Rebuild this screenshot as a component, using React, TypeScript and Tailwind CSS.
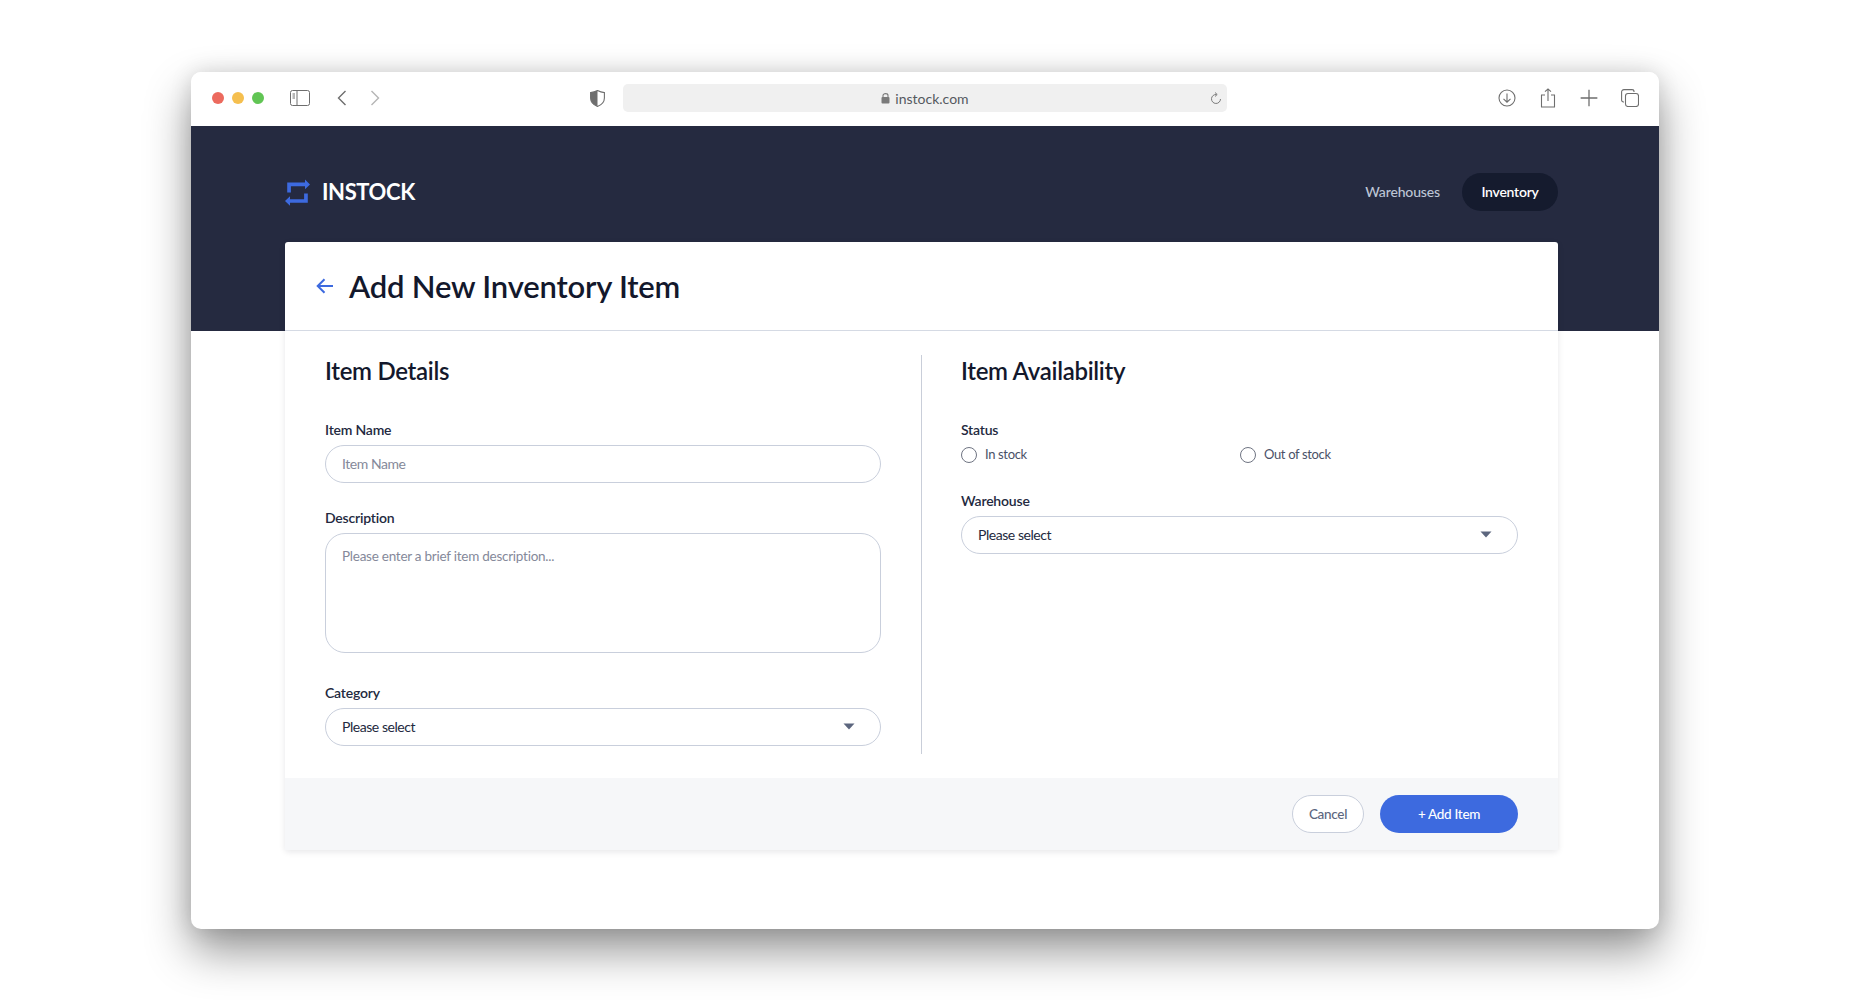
import React from 'react';

const Caret = () => (
  <svg width="12" height="7" viewBox="0 0 12 7" className="mr-[17px]">
    <path d="M0.5 0.5H11.5L6 6.5Z" fill="#5c667e" />
  </svg>
);

const FieldLabel = ({ children, className = '' }: { children: React.ReactNode; className?: string }) => (
  <label className={`block h-5 text-[14px] leading-5 font-semibold tracking-[-0.2px] text-[#232940] ${className}`}>{children}</label>
);

const SelectBox = ({ className = '' }: { className?: string }) => (
  <div className={`flex items-center justify-between h-[38px] rounded-[19px] border border-[#c9cfdc] pl-4 pr-2 pb-px text-[14px] tracking-[-0.45px] text-[#232940] ${className}`}>
    <span>Please select</span>
    <Caret />
  </div>
);

const Radio = ({ label, className = '' }: { label: string; className?: string }) => (
  <label className={`flex items-center gap-2 h-5 text-[13px] tracking-[-0.35px] text-[#4a5168] ${className}`}>
    <span className="block w-4 h-4 rounded-full border border-[#6f7482]" />
    {label}
  </label>
);

const Toolbar = () => (
  <div className="flex items-center h-[54px] pl-[21px] pr-[20px] pb-[2px] bg-white text-[#6e6e6e]">
    <div className="flex items-center gap-2">
      <span className="block w-3 h-3 rounded-full bg-[#ec6a5e]" />
      <span className="block w-3 h-3 rounded-full bg-[#f5bf4f]" />
      <span className="block w-3 h-3 rounded-full bg-[#61c554]" />
    </div>
    <svg width="20" height="16" viewBox="0 0 20 16" fill="none" stroke="currentColor" className="ml-[26px]">
      <rect x="0.5" y="0.5" width="19" height="15" rx="2" />
      <path d="M7 0.5V15.5" />
      <path d="M2.5 4H5M2.5 6H5M2.5 8H5" />
    </svg>
    <svg width="10" height="16" viewBox="0 0 10 16" fill="none" stroke="currentColor" strokeWidth="1.4" className="ml-[27px]">
      <path d="M8.5 1L1.5 8L8.5 15" />
    </svg>
    <svg width="10" height="16" viewBox="0 0 10 16" fill="none" stroke="#b5b5b5" strokeWidth="1.4" className="ml-[23px]">
      <path d="M1.5 1L8.5 8L1.5 15" />
    </svg>
    <svg width="15" height="17" viewBox="0 0 15 17" className="ml-[210px]">
      <path d="M7.5 0.6C9.8 1.8 12 2.4 14.4 2.6V8C14.4 12 11.4 14.9 7.5 16.4C3.6 14.9 0.6 12 0.6 8V2.6C3 2.4 5.2 1.8 7.5 0.6Z" fill="none" stroke="#6e6e6e" strokeWidth="1.1" />
      <path d="M7.5 0.6C5.2 1.8 3 2.4 0.6 2.6V8C0.6 12 3.6 14.9 7.5 16.4Z" fill="#6e6e6e" />
    </svg>
    <div className="relative flex items-center justify-center ml-[18px] w-[604px] h-7 rounded-[5px] bg-[#f0f0f0] text-[14px] text-[#55595f]">
      <svg width="9" height="12" viewBox="0 0 9 12" className="mr-[5px]">
        <path d="M2 5.5V3.5C2 1 7 1 7 3.5V5.5" fill="none" stroke="#7a7a7a" strokeWidth="1.1" />
        <rect x="0.5" y="5" width="8" height="6.5" rx="1" fill="#7a7a7a" />
      </svg>
      instock.com
      <svg width="12" height="13" viewBox="0 0 12 13" fill="none" stroke="#7a7a7a" className="absolute right-[5px] top-[8px]">
        <path d="M6.5 2.5A4.5 4.5 0 1 0 10.5 7" />
        <path d="M5 0.5L7.2 2.5L5 4.5" />
      </svg>
    </div>
    <div className="flex items-center ml-auto gap-[23px]">
      <svg width="18" height="18" viewBox="0 0 18 18" fill="none" stroke="currentColor" strokeWidth="1.1">
        <circle cx="9" cy="9" r="8" />
        <path d="M9 4.5V13M5.5 9.8L9 13.2L12.5 9.8" />
      </svg>
      <svg width="18" height="20" viewBox="0 0 16 20" fill="none" stroke="currentColor" strokeWidth="1.1">
        <path d="M5 7H1.5V19H14.5V7H11" />
        <path d="M8 13V1M5 3.7L8 0.9L11 3.7" />
      </svg>
      <svg width="18" height="18" viewBox="0 0 14 14" fill="none" stroke="currentColor" strokeWidth="1">
        <path d="M7 0.5V13.5M0.5 7H13.5" />
      </svg>
      <svg width="18" height="18" viewBox="0 0 18 18" fill="none" stroke="currentColor" strokeWidth="1.1">
        <path d="M3 13H2.5C1.4 13 0.6 12.2 0.6 11V3C0.6 1.6 1.5 0.6 3 0.6H11C12.2 0.6 13 1.4 13 2.5V3" />
        <rect x="4.5" y="4.5" width="13" height="13" rx="2.5" />
      </svg>
    </div>
  </div>
);

const App = () => {
  return (
    <div className="min-h-screen bg-white pt-[72px] pl-[191px] font-['Lato',sans-serif]">
      <div className="w-[1468px] h-[857px] rounded-[10px] overflow-hidden bg-white shadow-[0_22px_45px_rgba(0,0,0,0.42),0_0_22px_rgba(0,0,0,0.12)]">
        <Toolbar />
        <div className="h-[205px] bg-[#252a40] pl-[94px] pr-[101px] pt-[47px]">
          <div className="flex items-center justify-between h-[38px]">
            <div className="flex items-center gap-[12px]">
              <svg width="25" height="27" viewBox="0 0 25 27" fill="#3d6adf">
                <path d="M2.2 13.5V3.6H20V0.6L25 5.4L20 10.2V7.2H5.9V13.5Z" />
                <path d="M22.8 14.5V23.8H5V26.8L0 22L5 17.2V20.2H19.1V14.5Z" />
              </svg>
              <span className="text-[22px] leading-none font-bold tracking-[-0.4px] text-white">INSTOCK</span>
            </div>
            <nav className="flex items-center gap-[22px] pb-px">
              <a className="text-[14px] font-medium tracking-[-0.15px] text-[#bdc5d5]">Warehouses</a>
              <a className="flex items-center justify-center w-[96px] h-[38px] rounded-[19px] bg-[#151b2e] text-[14px] font-semibold tracking-[-0.25px] text-white">Inventory</a>
            </nav>
          </div>
        </div>
        <div className="relative -mt-[89px] ml-[94px] w-[1273px] rounded-[3px] bg-white shadow-[0_2px_6px_rgba(19,24,44,0.1)]">
          <div className="flex items-center h-[89px] pl-[32px] border-b border-[#d5dae4]">
            <svg width="18" height="16" viewBox="0 0 18 16" fill="none" stroke="#3d6adf" strokeWidth="2" className="-ml-px">
              <path d="M17 8H2M8.5 1.2L1.7 8L8.5 14.8" />
            </svg>
            <h1 className="ml-[15px] text-[31px] leading-10 font-semibold tracking-[-0.2px] text-[#13182c]">Add New Inventory Item</h1>
          </div>
          <div className="flex pt-[24px] pb-[24px]">
            <section className="w-[637px] shrink-0 pl-[40px] pr-[40px] pb-2 border-r border-[#c9ced9]">
              <h2 className="h-8 text-[24px] leading-8 font-semibold tracking-[-0.3px] text-[#13182c]">Item Details</h2>
              <FieldLabel className="mt-[33px]">Item Name</FieldLabel>
              <input placeholder="Item Name" className="block mt-[5px] w-full h-[38px] rounded-[19px] border border-[#c9cfdc] px-4 pb-px text-[14px] tracking-[-0.45px] placeholder:text-[#85899a]" />
              <FieldLabel className="mt-[25px]">Description</FieldLabel>
              <textarea placeholder="Please enter a brief item description..." className="block mt-[5px] w-full h-[120px] rounded-[20px] border border-[#c9cfdc] px-4 py-3 text-[13.5px] leading-5 tracking-[-0.25px] resize-none placeholder:text-[#85899a]" />
              <FieldLabel className="mt-[30px]">Category</FieldLabel>
              <SelectBox className="mt-[5px]" />
            </section>
            <section className="flex-1 pl-[39px] pr-[40px]">
              <h2 className="h-8 text-[24px] leading-8 font-semibold tracking-[-0.3px] text-[#13182c]">Item Availability</h2>
              <FieldLabel className="mt-[33px]">Status</FieldLabel>
              <div className="flex mt-[5px]">
                <Radio label="In stock" className="w-[279px]" />
                <Radio label="Out of stock" />
              </div>
              <FieldLabel className="mt-[26px]">Warehouse</FieldLabel>
              <SelectBox className="mt-[5px]" />
            </section>
          </div>
          <div className="flex items-center justify-end gap-4 h-[72px] pr-[40px] bg-[#f6f7f9]">
            <button className="w-[72px] h-[38px] rounded-[19px] border border-[#c9cfdc] bg-white text-[13.5px] font-medium tracking-[-0.3px] text-[#5c667e]">Cancel</button>
            <button className="w-[138px] h-[38px] rounded-[19px] bg-[#3d6adf] text-[13.5px] font-medium tracking-[-0.3px] text-white">+ Add Item</button>
          </div>
        </div>
      </div>
    </div>
  );
};

export default App;
